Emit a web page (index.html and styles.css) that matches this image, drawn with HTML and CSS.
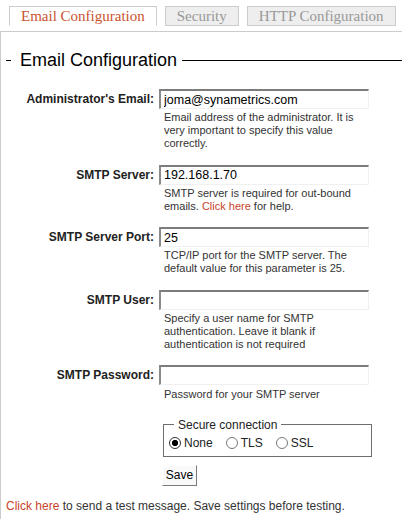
FILE: index.html
```html
<!DOCTYPE html>
<html lang="en">
<head>
<meta charset="utf-8">
<title>Email Configuration</title>
<link rel="stylesheet" href="styles.css">
</head>
<body>
<div class="tabs">
  <a class="tab tab-active" href="#">Email Configuration</a>
  <a class="tab" href="#">Security</a>
  <a class="tab" href="#">HTTP Configuration</a>
</div>
<div class="panel">
  <fieldset class="section">
    <legend class="section-title">Email Configuration</legend>
    <form class="form">
      <label class="lbl" for="admin">Administrator's Email:</label>
      <input class="txt" id="admin" type="text" value="joma@synametrics.com">
      <div class="help">Email address of the administrator. It is very important to specify this value correctly.</div>

      <label class="lbl" for="server">SMTP Server:</label>
      <input class="txt" id="server" type="text" value="192.168.1.70">
      <div class="help">SMTP server is required for out-bound emails. <a class="link" href="#">Click here</a> for help.</div>

      <label class="lbl" for="port">SMTP Server Port:</label>
      <input class="txt" id="port" type="text" value="25">
      <div class="help">TCP/IP port for the SMTP server. The default value for this parameter is 25.</div>

      <label class="lbl" for="user">SMTP User:</label>
      <input class="txt" id="user" type="text" value="">
      <div class="help">Specify a user name for SMTP authentication. Leave it blank if authentication is not required</div>

      <label class="lbl" for="pass">SMTP Password:</label>
      <input class="txt" id="pass" type="password" value="">
      <div class="help help-last">Password for your SMTP server</div>

      <fieldset class="secure">
        <legend class="secure-title">Secure connection</legend>
        <div class="opts">
          <label class="opt"><input class="radio" type="radio" name="sec" checked>None</label>
          <label class="opt"><input class="radio" type="radio" name="sec">TLS</label>
          <label class="opt"><input class="radio" type="radio" name="sec">SSL</label>
        </div>
      </fieldset>
      <button class="save" type="button">Save</button>
    </form>
  </fieldset>
  <p class="note"><a class="link" href="#">Click here</a> to send a test message. Save settings before testing.</p>
</div>
</body>
</html>
```
FILE: styles.css
```css
html, body {
  margin: 0;
  padding: 0;
  background: #fff;
}
body {
  font-family: "Liberation Sans", Arial, sans-serif;
  color: #222;
}
.tabs {
  display: flex;
  gap: 8px;
  padding: 6px 0 0 9px;
}
.tab {
  display: block;
  height: 18px;
  line-height: 18px;
  padding: 0 11px 0 11px;
  font-family: "Liberation Serif", "Times New Roman", serif;
  font-size: 15px;
  color: #999;
  text-decoration: none;
  background: #eee;
  border: 1px solid #ccc;
}
.tab-active {
  background: #fff;
  color: #c9532e;
  border-bottom-color: #fff;
}
.panel {
  margin-top: 5px;
  border: 1px solid #ccc;
  border-right: none;
  padding: 18px 0 7px 5px;
}
.section {
  margin: 0;
  padding: 0 0 0 5px;
  border: none;
  border-top: 1px solid #000;
  min-width: 0;
}
.section-title {
  padding: 0 5px 0 9px;
  font-size: 18px;
  line-height: 21px;
  color: #000;
}
.form {
  display: grid;
  grid-template-columns: 143px 210px;
  column-gap: 5px;
  margin: 18px 0 0 0;
}
.lbl {
  grid-column: 1;
  align-self: center;
  text-align: right;
  font-weight: bold;
  font-size: 12px;
  color: #222;
}
.txt {
  grid-column: 2;
  box-sizing: border-box;
  width: 210px;
  height: 20px;
  margin: 0;
  padding: 0 3px;
  font-family: "Liberation Sans", Arial, sans-serif;
  font-size: 12.5px;
  color: #000;
  background: #fff;
  border-style: solid;
  border-width: 2px 1px 1px 2px;
  border-color: #7c7c7c #f0f0f0 #f0f0f0 #8a8a8a;
  outline: none;
}
.help {
  grid-column: 2;
  width: 200px;
  margin: 2px 0 14.5px 0;
  padding-left: 5px;
  font-size: 11px;
  line-height: 13px;
  color: #333;
}
.help-last {
  margin-top: 3px;
}
.link {
  color: #c8432b;
  text-decoration: none;
}
.secure {
  grid-column: 2;
  box-sizing: border-box;
  width: 209px;
  margin: 2px 0 0 4px;
  padding: 4px 0 6px 5px;
  border: 1px solid #6e6e6e;
  min-width: 0;
}
.secure-title {
  margin-left: 5px;
  padding: 0 4px;
  font-size: 12px;
  line-height: 14px;
  color: #222;
}
.opts {
  display: flex;
  gap: 13px;
  font-size: 12px;
  line-height: 14px;
  color: #222;
}
.opt {
  display: flex;
  align-items: center;
}
.radio {
  appearance: none;
  -webkit-appearance: none;
  box-sizing: border-box;
  width: 12px;
  height: 12px;
  margin: 0 3px 0 0;
  border: 1px solid #777;
  border-radius: 50%;
  background: #fff;
}
.radio:checked {
  border-color: #333;
  background: radial-gradient(circle, #000 0 2.8px, #fff 3.4px);
}
.save {
  grid-column: 2;
  justify-self: start;
  box-sizing: border-box;
  width: 35px;
  height: 21px;
  margin: 8px 0 0 3px;
  padding: 0;
  font-family: "Liberation Sans", Arial, sans-serif;
  font-size: 12px;
  color: #000;
  background: #f9f9f9;
  border: 1px solid;
  border-color: #fff #7a7a7a #7a7a7a #fff;
}
.note {
  margin: 13px 0 0 0;
  font-size: 12px;
  line-height: 14px;
  color: #333;
}
```
